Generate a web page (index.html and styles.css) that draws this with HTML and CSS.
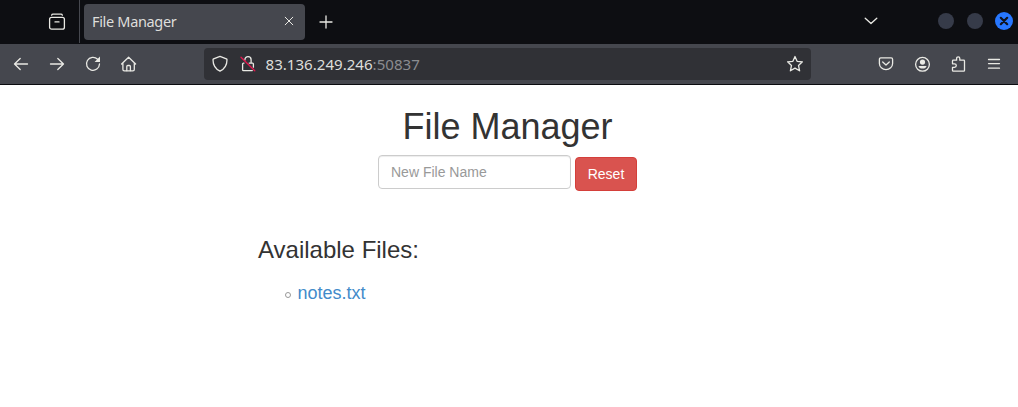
FILE: index.html
```html
<!DOCTYPE html>
<html lang="en">
<head>
<meta charset="utf-8">
<title>File Manager</title>
<link rel="stylesheet" href="styles.css">
</head>
<body>
<div class="tabs">
  <div class="archive"><svg class="icon" viewBox="0 0 18 18"><path d="M3.6 2.200Q4 1.200 5 1.200h8q1 0 1.400 1"/><rect x="1.600" y="4.300" width="14.800" height="11.900" rx="2"/><path d="M7 8.900h4"/></svg></div>
  <div class="tab"><span class="tab-title">File Manager</span><svg class="close" viewBox="0 0 10 10"><path d="M1.200 1.200l7.600 7.600M8.800 1.200L1.200 8.800"/></svg></div>
  <svg class="plus" viewBox="0 0 14 14"><path d="M7 1v12M1 7h12"/></svg>
  <div class="window-controls">
    <svg class="chevron" viewBox="0 0 14 8"><path d="M1.200 1.200L7 6.600l5.800-5.400"/></svg>
    <i class="dot"></i><i class="dot"></i>
    <span class="quit"><svg viewBox="0 0 10 10"><path d="M1.800 1.800l6.400 6.400M8.200 1.800L1.800 8.200"/></svg></span>
  </div>
</div>
<div class="toolbar">
  <div class="nav">
    <svg class="icon" viewBox="0 0 18 18"><path d="M15.500 9H2.500M8.200 3.500L2.500 9l5.700 5.500"/></svg>
    <svg class="icon" viewBox="0 0 18 18"><path d="M2.500 9h13M9.800 3.500L15.500 9l-5.700 5.500"/></svg>
    <svg class="icon" viewBox="0 0 18 18"><path d="M13.600 4.200A6.500 6.500 0 1 0 15.500 9"/><path class="fill" d="M16 1.400v5.300q0 .4-.4.4h-5z"/></svg>
    <svg class="icon" viewBox="0 0 18 18"><path d="M1.600 9l7-6.800L15.600 9M2.900 8v6.500q0 1.400 1.400 1.400h8.600q1.400 0 1.400-1.400V8"/><path d="M6.800 15.700v-4.200q0-1 1-1h1.600q1 0 1 1v4.200"/></svg>
  </div>
  <div class="address">
    <svg class="icon" viewBox="0 0 18 18"><path d="M9 1.400l6.400 2.500q.6.300.6.900c0 5-2 9-7 11.400C4 13.800 2 9.800 2 4.800q0-.6.6-.9z"/></svg>
    <svg class="icon lock" viewBox="0 0 18 18"><path d="M5.900 5V4.700a3.100 3.100 0 0 1 6.200 0V7.500"/><path d="M5 8.100H4.500q-.9 0-.9.900v5.700q0 .9.900.9h8.800M10.200 8.100h3.300q.9 0 .9.900v3.200"/><path class="slash" d="M2 2.200l13.800 13.600"/></svg>
    <span class="url">83.136.249.246<span>:50837</span></span>
    <svg class="icon star" viewBox="0 0 18 18"><path d="M9 1.500l2.100 4.800 5.300.5-3.900 3.600 1.100 5.400L9 13.100l-4.600 2.700 1.100-5.400-3.900-3.600 5.300-.5z"/></svg>
  </div>
  <div class="actions">
    <svg class="icon" viewBox="0 0 18 18"><path d="M3.800 2.900h10.400q1.400 0 1.400 1.500v4.200a6.600 6 0 0 1-13.200 0V4.400q0-1.500 1.400-1.500z"/><path d="M5.700 7L9 10l3.300-3"/></svg>
    <svg class="icon" viewBox="0 0 18 18"><circle cx="9.500" cy="9.300" r="6.900"/><circle class="fill" cx="9.500" cy="7.100" r="2.600"/><path class="fill" d="M5.500 10.900h8c0 3.400-8 3.400-8 0z"/></svg>
    <svg class="icon" viewBox="0 0 18 18"><path d="M3.500 7V6q0-.8.8-.8h3.300V3.400a1.600 1.600 0 0 1 3.200 0v1.800h3.900q.8 0 .8.800v9.400q0 .8-.8.800H4.300q-.8 0-.8-.8v-3h2a1.600 1.600 0 0 0 0-3.600h-2z"/></svg>
    <svg class="icon" viewBox="0 0 18 18"><path d="M3.500 4.500h11M3.500 8.600h11M3.500 13.200h11"/></svg>
  </div>
</div>
<main class="page">
  <h1 class="heading">File Manager</h1>
  <form class="create"><input class="name" type="text" placeholder="New File Name"><button class="reset" type="button">Reset</button></form>
  <section class="files">
    <h3 class="subheading">Available Files:</h3>
    <ul class="list"><li><i class="bullet"></i><a class="link">notes.txt</a></li></ul>
  </section>
</main>
</body>
</html>
```
FILE: styles.css
```css
* { box-sizing: border-box; }
body { margin: 0; height: 407px; overflow: hidden; background: #fff; font-family: "Liberation Sans", Arial, sans-serif; color: #333; }
svg { display: block; flex: none; fill: none; stroke: #e9e9e4; stroke-width: 1.3; stroke-linecap: round; stroke-linejoin: round; }
.icon { width: 18px; height: 18px; }
.fill { fill: #e9e9e4; stroke: none; }
.tabs { display: flex; align-items: center; height: 44px; padding-bottom: 1px; background: #0d0e12; }
.archive { display: flex; align-items: center; justify-content: flex-end; width: 80px; height: 43px; padding-right: 13px; border-right: 1px solid #46484f; }
.tab { display: flex; align-items: center; justify-content: space-between; width: 221px; height: 36px; margin-left: 4px; padding: 0 11px 0 8px; border-radius: 4px; background: #45474e; color: #dededb; font: 14.5px "Noto Sans", sans-serif; }
.tab-title { margin-bottom: 2px; letter-spacing: -.33px; }
.close { width: 10px; height: 10px; margin-bottom: 1px; stroke-width: 1; }
.plus { width: 14px; height: 14px; margin-left: 14px; }
.window-controls { display: flex; align-items: center; margin-left: auto; padding-right: 5px; }
.chevron { width: 14px; height: 8px; margin: -2px 60px 0 0; }
.dot { width: 16px; height: 16px; margin: -1px 13px 0 0; border-radius: 50%; background: #363b49; }
.quit { display: flex; align-items: center; justify-content: center; width: 18px; height: 18px; margin: -1px 0 0 -1px; border-radius: 50%; background: #2777ff; }
.quit svg { width: 10px; height: 10px; stroke: #10131c; stroke-width: 2.200; }
.toolbar { display: flex; align-items: center; height: 41px; border-bottom: 1px solid #0b0c10; background: #45474e; }
.nav { display: flex; gap: 18px; width: 204px; padding-left: 12px; }
.address { display: flex; align-items: center; width: 607px; height: 32px; padding: 0 7px; border-radius: 4px; background: #303136; }
.lock { margin-left: 10px; }
.slash { stroke: #e4174f; }
.url { margin-left: 8.5px; color: #dededb; font: 15.1px "Noto Sans", sans-serif; }
.url span { color: #8b8c90; }
.star { margin-left: auto; }
.actions { display: flex; gap: 18px; margin-left: auto; padding-right: 15px; }
.page { width: 500px; margin: 0 auto; padding-top: 22px; }
.heading { margin: 0; padding-right: 3px; font-size: 36px; font-weight: 400; line-height: 40px; text-align: center; }
.create { display: flex; align-items: flex-start; justify-content: center; gap: 4px; margin: 8px 3px 0 0; }
.name { width: 193px; height: 34px; padding: 6px 12px; border: 1px solid #ccc; border-radius: 4px; box-shadow: inset 0 1px 1px rgba(0, 0, 0, .075); font: 14px "Liberation Sans", Arial, sans-serif; }
.name::placeholder { color: #999; opacity: 1; }
.reset { width: 62px; height: 34px; margin-top: 2px; padding: 0; border: 1px solid #d43f3a; border-radius: 4px; background: #d9534f; color: #fff; font: 14px "Liberation Sans", Arial, sans-serif; }
.files { padding-top: 46px; }
.subheading { margin: 0 0 0 -1px; font-size: 24px; font-weight: 400; line-height: 26px; }
.list { margin: 17px 0 0; padding: 0 0 0 26px; list-style: none; font-size: 18px; line-height: 26px; }
.list li { display: flex; align-items: center; }
.bullet { width: 6px; height: 6px; margin: 3px 6.500px 0 0; border: 1px solid #999; border-radius: 50%; }
.link { color: #428bca; }
```
